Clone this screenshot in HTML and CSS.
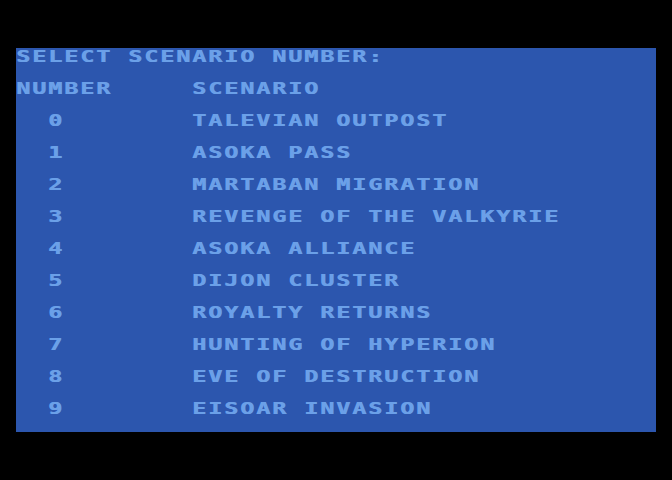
FILE: index.html
```html
<!DOCTYPE html>
<html>
<head>
<meta charset="utf-8">
<title>Select Scenario</title>
<link rel="stylesheet" href="styles.css">
</head>
<body>
<main class="screen">
  <div class="line"><span class="txt">SELECT SCENARIO NUMBER:</span></div>
  <div class="line row">
    <span class="cell-num"><span class="txt">NUMBER</span></span>
    <span class="cell-name"><span class="txt">SCENARIO</span></span>
  </div>
  <div class="line row"><span class="cell-num indent"><span class="txt">0</span></span><span class="cell-name"><span class="txt">TALEVIAN OUTPOST</span></span></div>
  <div class="line row"><span class="cell-num indent"><span class="txt">1</span></span><span class="cell-name"><span class="txt">ASOKA PASS</span></span></div>
  <div class="line row"><span class="cell-num indent"><span class="txt">2</span></span><span class="cell-name"><span class="txt">MARTABAN MIGRATION</span></span></div>
  <div class="line row"><span class="cell-num indent"><span class="txt">3</span></span><span class="cell-name"><span class="txt">REVENGE OF THE VALKYRIE</span></span></div>
  <div class="line row"><span class="cell-num indent"><span class="txt">4</span></span><span class="cell-name"><span class="txt">ASOKA ALLIANCE</span></span></div>
  <div class="line row"><span class="cell-num indent"><span class="txt">5</span></span><span class="cell-name"><span class="txt">DIJON CLUSTER</span></span></div>
  <div class="line row"><span class="cell-num indent"><span class="txt">6</span></span><span class="cell-name"><span class="txt">ROYALTY RETURNS</span></span></div>
  <div class="line row"><span class="cell-num indent"><span class="txt">7</span></span><span class="cell-name"><span class="txt">HUNTING OF HYPERION</span></span></div>
  <div class="line row"><span class="cell-num indent"><span class="txt">8</span></span><span class="cell-name"><span class="txt">EVE OF DESTRUCTION</span></span></div>
  <div class="line row"><span class="cell-num indent"><span class="txt">9</span></span><span class="cell-name"><span class="txt">EISOAR INVASION</span></span></div>
</main>
</body>
</html>
```

FILE: styles.css
```css
html, body {
  margin: 0;
  padding: 0;
  background: #000;
}

body {
  width: 672px;
  height: 480px;
  overflow: hidden;
}

/* 40x24 character playfield, 16px cells */
.screen {
  margin: 48px 0 0 16px;
  width: 640px;
  height: 384px;
  background: #2c56ae;
  color: #6ba0e8;
  font-family: "DejaVu Sans Mono", "Liberation Mono", monospace;
  font-weight: bold;
  font-size: 18px;
  display: flex;
  flex-direction: column;
}

/* each text line is followed by a blank character row */
.line {
  height: 32px;
  line-height: 16px;
  white-space: pre;
}

.row {
  display: grid;
  grid-template-columns: 176px 1fr;
}

.indent {
  padding-left: 32px;
}

/* widened, slightly squat glyphs with heavy stems */
.txt {
  display: inline-block;
  letter-spacing: 1.47px;
  transform: scale(1.3, 0.92);
  transform-origin: 0 50%;
  text-shadow: 0.6px 0 0 currentColor;
}
```
